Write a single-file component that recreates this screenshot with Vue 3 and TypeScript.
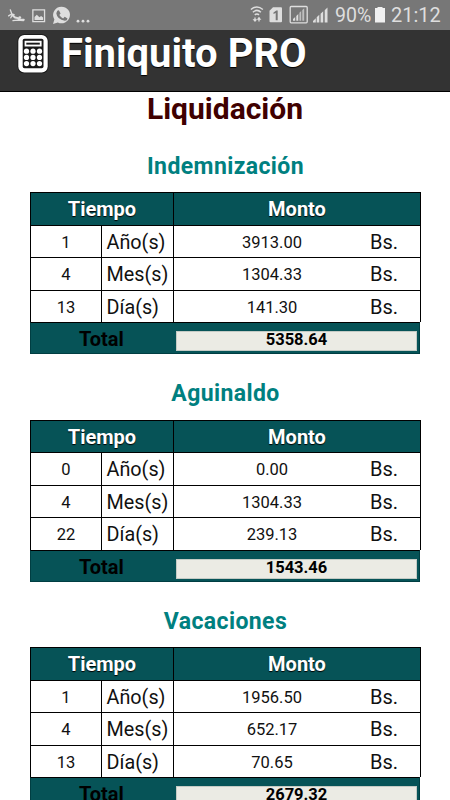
<script setup lang="ts">
interface Row {
  count: number
  unit: string
  amount: string
}

interface Section {
  name: string
  rows: Row[]
  total: string
}

const units = ['Año(s)', 'Mes(s)', 'Día(s)']

function makeRows(counts: number[], amounts: string[]): Row[] {
  return units.map((unit, i) => ({ count: counts[i], unit, amount: amounts[i] }))
}

const sections: Section[] = [
  { name: 'Indemnización', rows: makeRows([1, 4, 13], ['3913.00', '1304.33', '141.30']), total: '5358.64' },
  { name: 'Aguinaldo', rows: makeRows([0, 4, 22], ['0.00', '1304.33', '239.13']), total: '1543.46' },
  { name: 'Vacaciones', rows: makeRows([1, 4, 13], ['1956.50', '652.17', '70.65']), total: '2679.32' },
]
</script>

<template>
  <div class="screen">
    <div class="status">
      <svg class="notifications" width="100" height="30" viewBox="0 0 100 30" fill="#dedede">
        <g fill="none" stroke="#dedede" stroke-linecap="round">
          <path d="M10.300 9.800l1.500 4.200 2.300.6M11.600 14l-3 1.900M12.500 14.500l-1.700 3.300" stroke-width="1.300" />
          <path d="M12.500 15.300l2.600 2.200 2.700.6 1.700 1.500 4.200.2" stroke-width="2.100" />
          <path d="M13 20.600l4-.5 6.500.4" stroke-width="1.400" />
        </g>
        <circle cx="19.800" cy="17.600" r="1.400" />
        <path d="M32.200 9.200h13v13h-13z M33.500 10.500v10.400h10.400v-10.400z" fill-rule="evenodd" />
        <path d="M34.500 20v-3l2.300-2.300 2.600 2.600 1.700-1.400 2 1.700v2.400z" />
        <path d="M61.500 6.700a8.500 8.300 0 1 1-3.700 15.800l-4.800 1.400 1.400-4.500a8.500 8.300 0 0 1 7.100-12.700z" />
        <path d="M57.300 10.700l1.600-.5 1.700 3.200-1.300 1.700q1.500 2.300 3.800 3.300l1.600-1.600 2.800 1.600q-.2 2.400-2.600 2.400-7.800-1.300-8.600-7.500z" fill="#777" />
        <circle cx="78" cy="21.200" r="1.400" />
        <circle cx="83" cy="21.200" r="1.400" />
        <circle cx="88" cy="21.200" r="1.400" />
      </svg>
      <div class="indicators">
        <svg width="82" height="30" viewBox="0 0 82 30" fill="#dedede">
          <g fill="none" stroke="#dedede" stroke-width="1.500">
            <path d="M.9 9.500q6-5 12 0M2.900 12.200q4-3.600 8 0M4.800 14.900q2.100-1.900 4.200 0" />
            <path d="M5 21v-3.500M9 17.500v4" stroke-width="1.300" />
          </g>
          <path d="M2.600 19.300h4.800l-2.400 2.700zM6.600 19.700h4.800l-2.400-2.700z" />
          <path d="M23 7.300h8q1 0 1 1v13q0 1-1 1h-10.500q-1 0-1-1v-10.500z" />
          <path d="M23.500 12.500l2.800-2h1.400v9.800h-2v-7.200l-2.200 1z" fill="#777" />
          <rect x="40.200" y="6.500" width="17" height="16.300" rx="1" fill="none" stroke="#dedede" stroke-width="1.300" />
          <path d="M43 20.700v-1.700l2.200-2v3.700zM46.300 20.700v-4.800l2-1.900v6.700z" />
          <path d="M49.400 20.700v-7.900l1.800-1.700v9.600zM52.300 20.700v-10.600l1.900-1.800v12.400z" opacity=".7" />
          <path d="M63 22.500v-1.500l2.800-2.700v4.200zM66.700 22.500v-5.200l2.600-2.500v7.700zM70.600 22.500v-8.700l2.600-2.500v11.200zM74.700 22.500v-12.200l2.800-2.800v15z" />
        </svg>
        <span class="percent">90%</span>
        <svg class="battery" width="10" height="30" viewBox="0 0 10 30" fill="#f0f0f0">
          <path d="M2.500 7h5v1h2.500v14.500h-10v-14.500h2.500z" />
        </svg>
        <span class="clock">21:12</span>
      </div>
    </div>

    <header class="bar">
      <svg class="calculator" width="32" height="40" viewBox="0 0 32 40">
        <rect x=".5" y=".3" width="31" height="39" rx="6.500" fill="#151515" />
        <rect x="1.300" y="1" width="29.400" height="37.400" rx="6" fill="#fff" />
        <rect x="5.700" y="4.800" width="20.800" height="29.500" rx="1.800" fill="#191919" />
        <rect x="7.600" y="6.800" width="17" height="5.700" fill="#fff" />
        <rect x="9.300" y="8.700" width="13.500" height="1.900" fill="#191919" />
        <g fill="#fff">
          <template v-for="y in 3" :key="y">
            <circle v-for="x in 3" :key="x" :cx="3 + x * 6.5" :cy="11 + y * 6.200" r="2.600" />
          </template>
        </g>
      </svg>
      <h1>Finiquito PRO</h1>
    </header>

    <main>
      <h2>Liquidación</h2>
      <section v-for="section in sections" :key="section.name">
        <h3>{{ section.name }}</h3>
        <div class="table">
          <div class="row head">
            <div class="time">Tiempo</div>
            <div class="money"><span>Monto</span></div>
          </div>
          <div v-for="row in section.rows" :key="row.unit" class="row">
            <div class="count">{{ row.count }}</div>
            <div class="unit">{{ row.unit }}</div>
            <div class="money">
              <span class="amount">{{ row.amount }}</span>
              <span class="currency">Bs.</span>
            </div>
          </div>
        </div>
        <div class="total">
          <div class="label">Total</div>
          <div class="field">{{ section.total }}</div>
        </div>
      </section>
    </main>
  </div>
</template>

<style>
body {
  margin: 0;
  background: #fff;
}
</style>

<style scoped>
.screen {
  width: 450px;
  height: 800px;
  overflow: hidden;
  background: #fff;
  color: #111;
  font-family: Roboto, "Liberation Sans", sans-serif;
}

.screen * {
  box-sizing: border-box;
}

.status {
  display: flex;
  justify-content: space-between;
  height: 30px;
  padding-right: 10px;
  background: #777;
  color: #dedede;
  font-size: 20px;
  line-height: 32px;
  white-space: nowrap;
}

.status svg {
  flex: none;
  display: block;
}

.indicators {
  display: flex;
}

.percent {
  width: 40px;
  margin-left: 3px;
  font-size: 19.500px;
}

.battery {
  margin-right: 6px;
}

.clock {
  width: 49px;
  line-height: 31px;
}

.bar {
  display: flex;
  height: 62px;
  padding: 4px 0 0 17px;
  background: #333;
  border-bottom: 1px solid #000;
  color: #fff;
}

.calculator {
  flex: none;
}

h1 {
  margin: 0 0 0 12px;
  font-size: 40px;
  line-height: 40px;
  font-weight: 700;
  white-space: nowrap;
  text-shadow: 0 1px 1px #000;
}

h2 {
  height: 46.500px;
  margin: 0;
  font-size: 30px;
  line-height: 34px;
  font-weight: 700;
  color: #400000;
  text-align: center;
}

section {
  height: 227.500px;
  padding: 0 29px 0 30px;
}

h3 {
  height: 53.500px;
  margin: 0;
  font-size: 23px;
  line-height: 55px;
  font-weight: 700;
  letter-spacing: 0.400px;
  color: #008080;
  text-align: center;
}

.table {
  height: 130px;
  border-left: 1px solid #000;
}

.row {
  display: flex;
  height: 32.500px;
  border-top: 1px solid #000;
  font-size: 20px;
  line-height: 33px;
}

.row > div {
  border-right: 1px solid #000;
}

.head {
  background: #065357;
  color: #fff;
  font-weight: 700;
  text-align: center;
  text-shadow: 0 1px 1px #000;
}

.time {
  width: 143px;
}

.count {
  width: 71px;
  font-size: 16.500px;
  text-align: center;
}

.unit {
  width: 72px;
  padding-left: 4.500px;
  font-size: 19.800px;
}

.money {
  flex: 1;
  display: flex;
}

.head .money {
  justify-content: center;
}

.amount {
  width: 196px;
  font-size: 16.500px;
  text-align: center;
}

.total {
  display: flex;
  width: 390px;
  height: 32px;
  border: 1px solid #003e42;
  border-top-color: #000;
  background: #065357;
  color: #000;
  font-weight: 700;
}

.label {
  width: 145px;
  padding-right: 4px;
  font-size: 20px;
  line-height: 33px;
  text-align: center;
}

.field {
  width: 241px;
  height: 20px;
  margin-top: 8px;
  border: 1px solid #c4cbc5;
  background: #ebebe4;
  font-size: 16.500px;
  line-height: 16px;
  text-align: center;
}
</style>
